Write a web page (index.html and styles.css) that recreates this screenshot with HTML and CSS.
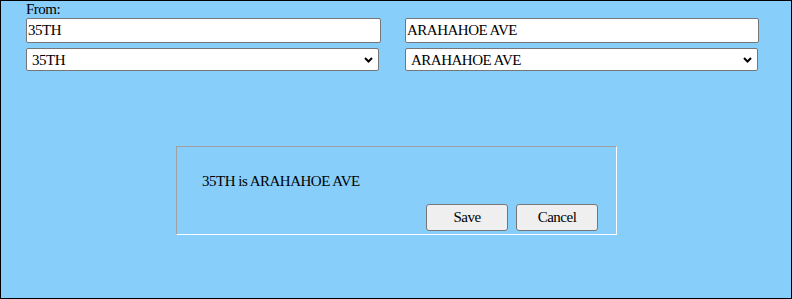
FILE: index.html
```html
<!DOCTYPE html>
<html lang="en">
<head>
    <meta charset="UTF-8">
    <title>Street Alias</title>
    <link rel="stylesheet" href="styles.css">
</head>
<body>
    <div class="page">
        <div class="fields">
            <label class="from-label" for="fromText">From:</label>
            <div class="row">
                <input type="text" id="fromText" class="street-input" value="35TH">
                <input type="text" id="toText" class="street-input" value="ARAHAHOE AVE">
            </div>
            <div class="row">
                <div class="select-wrap">
                    <select class="street-select">
                        <option>35TH</option>
                    </select>
                    <svg class="chevron" width="9" height="6" viewBox="0 0 9 6"><polyline points="1,1 4.5,4.5 8,1" fill="none" stroke="black" stroke-width="2"/></svg>
                </div>
                <div class="select-wrap">
                    <select class="street-select">
                        <option>ARAHAHOE AVE</option>
                    </select>
                    <svg class="chevron" width="9" height="6" viewBox="0 0 9 6"><polyline points="1,1 4.5,4.5 8,1" fill="none" stroke="black" stroke-width="2"/></svg>
                </div>
            </div>
        </div>

        <div class="confirm-box">
            <p class="confirm-text">35TH is ARAHAHOE AVE</p>
            <div class="confirm-buttons">
                <button type="button">Save</button>
                <button type="button">Cancel</button>
            </div>
        </div>
    </div>
</body>
</html>
```

FILE: styles.css
```css
body {
    margin: 0;
    font-family: "Liberation Serif", "Times New Roman", serif;
    font-size: 15px;
    letter-spacing: -0.5px;
}
.page {
    box-sizing: border-box;
    width: 792px;
    height: 299px;
    border: 1px solid black;
    background-color: #87cefa;
    padding-left: 25px;
}
.fields {
    display: flex;
    flex-direction: column;
}
.from-label {
    display: block;
    line-height: 17px;
    height: 17px;
}
.row {
    display: grid;
    grid-template-columns: 355px 354px;
    column-gap: 24px;
}
.row + .row {
    margin-top: 5px;
}
.street-input {
    box-sizing: border-box;
    height: 25px;
    width: 100%;
    margin: 0;
    padding: 1px 1px;
    border: 1px solid #767676;
    border-radius: 2px;
    background: white;
    font-family: "Liberation Serif", "Times New Roman", serif;
    font-size: 15px;
    letter-spacing: -0.5px;
    color: black;
}
.select-wrap {
    position: relative;
    width: 353px;
    height: 23px;
}
.street-select {
    -webkit-appearance: none;
    appearance: none;
    box-sizing: border-box;
    display: block;
    height: 23px;
    width: 353px;
    margin: 0;
    padding: 0 20px 0 5px;
    border: 1px solid #767676;
    border-radius: 2px;
    background-color: white;
    font-family: "Liberation Serif", "Times New Roman", serif;
    font-size: 15px;
    letter-spacing: -0.5px;
    color: black;
}
/* bold arrow drawn over the select */
.chevron {
    position: absolute;
    right: 6px;
    top: 9px;
    pointer-events: none;
}
/* confirmation box in the middle */
.confirm-box {
    box-sizing: border-box;
    width: 441px;
    height: 89px;
    margin: 75px auto 0 150px;
    border-top: 1px solid #a0a0a0;
    border-left: 1px solid #a0a0a0;
    border-right: 1px solid white;
    border-bottom: 1px solid white;
    padding: 25px 18px 2px 25px;
}
.confirm-text {
    margin: 0;
    line-height: 18px;
}
.confirm-buttons {
    display: flex;
    justify-content: flex-end;
    gap: 8px;
    margin-top: 14px;
}
.confirm-buttons button {
    box-sizing: border-box;
    width: 82px;
    height: 27px;
    background-color: #efefef;
    border: 1px solid #767676;
    border-radius: 3px;
    font-family: "Liberation Serif", "Times New Roman", serif;
    font-size: 15px;
    letter-spacing: -0.5px;
    color: black;
}
```
